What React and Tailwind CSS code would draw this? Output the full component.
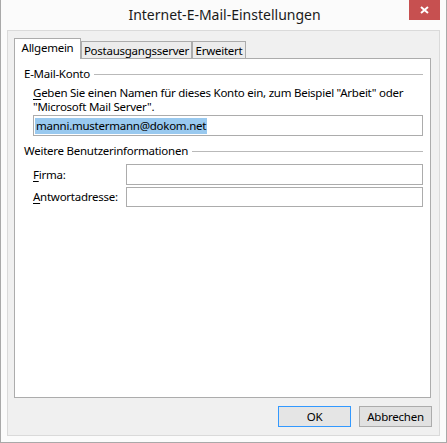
import React from "react";

export default function App() {
  const font = { fontFamily: '"Noto Sans", "Open Sans", sans-serif' };
  return (
    <div
      className="w-[447px] h-[443px] bg-[#fbfbfb] border-x border-b border-[#a9a9a9] flex flex-col text-[11.5px] tracking-[-0.25px] text-black"
      style={font}
    >
      {/* Title bar */}
      <div className="h-[30px] relative flex items-center justify-center shrink-0">
        <span className="text-[14px] tracking-normal leading-[20px] text-[#1a1a1a] pl-[2px] whitespace-nowrap">Internet-E-Mail-Einstellungen</span>
        <div className="absolute right-[6px] top-0 w-[31px] h-[20px] bg-[#c75050] flex items-center justify-center">
          <svg width="9" height="8" viewBox="0 0 9 8">
            <path d="M1 1 L8 7 M8 1 L1 7" stroke="#fff" strokeWidth="2" />
          </svg>
        </div>
      </div>

      {/* Client area */}
      <div className="mx-[6px] mb-[6px] flex-1 border border-[#dadada] bg-[#f0f0f0] flex flex-col pl-[6px] pr-[8px] pt-[7px]">
        {/* Tabs */}
        <div className="flex items-end h-[21px] whitespace-nowrap">
          <div className="relative z-10 w-[67px] h-[21px] bg-white border-t border-x border-[#acacac] flex items-center justify-center pb-[2px]">
            <span className="leading-[16px]">Allgemein</span>
          </div>
          <div className="w-[111px] h-[18px] bg-[#ececec] border-t border-x border-[#acacac] flex items-center justify-center">
            <span className="leading-[16px]">Postausgangsserver</span>
          </div>
          <div className="w-[54px] h-[18px] bg-[#ececec] border-t border-x border-[#acacac] flex items-center justify-center">
            <span className="leading-[16px]">Erweitert</span>
          </div>
        </div>

        {/* Panel */}
        <div className="-mt-[1px] h-[340px] bg-white border border-[#acacac] pl-[9px] pr-[7px] pt-[7px]">
          {/* Group 1 */}
          <div className="flex items-center h-[16px]">
            <span className="leading-[16px] whitespace-nowrap">E-Mail-Konto</span>
            <div className="flex-1 h-px bg-[#b9b9b9] ml-[4px]" />
          </div>
          <div className="pl-[9px]">
            <div className="mt-[4px] leading-[14px] whitespace-nowrap">
              <span className="underline underline-offset-2">G</span>eben Sie einen Namen für dieses Konto ein, zum Beispiel "Arbeit" oder
              <br />
              "Microsoft Mail Server".
            </div>
            <div className="mt-[1px] h-[21px] border border-[#acacac] bg-white flex items-center pl-[1px]">
              <span className="bg-[#99c9ef] leading-[16px] px-[1px] whitespace-nowrap">manni.mustermann@dokom.net</span>
            </div>
          </div>

          {/* Group 2 */}
          <div className="flex items-center h-[16px] mt-[7px]">
            <span className="leading-[16px] whitespace-nowrap">Weitere Benutzerinformationen</span>
            <div className="flex-1 h-px bg-[#b9b9b9] ml-[4px]" />
          </div>
          <div className="pl-[9px] mt-[5px] flex flex-col gap-[2px]">
            <div className="flex items-center">
              <div className="w-[93px] leading-[16px] whitespace-nowrap">
                <span className="underline underline-offset-2">F</span>irma:
              </div>
              <div className="flex-1 h-[21px] border border-[#acacac] bg-white" />
            </div>
            <div className="flex items-center">
              <div className="w-[93px] leading-[16px] whitespace-nowrap">
                <span className="underline underline-offset-2">A</span>ntwortadresse:
              </div>
              <div className="flex-1 h-[20px] border border-[#acacac] bg-white" />
            </div>
          </div>
        </div>

        {/* Buttons */}
        <div className="mt-[8px] flex justify-end gap-[8px] -mr-[1px]">
          <div className="w-[73px] h-[21px] border border-[#3399ff] bg-[#e5e5e5] flex items-center justify-center">
            <span className="leading-[16px]">OK</span>
          </div>
          <div className="w-[73px] h-[21px] border border-[#acacac] bg-[#e1e1e1] flex items-center justify-center">
            <span className="leading-[16px]">Abbrechen</span>
          </div>
        </div>
      </div>
    </div>
  );
}
